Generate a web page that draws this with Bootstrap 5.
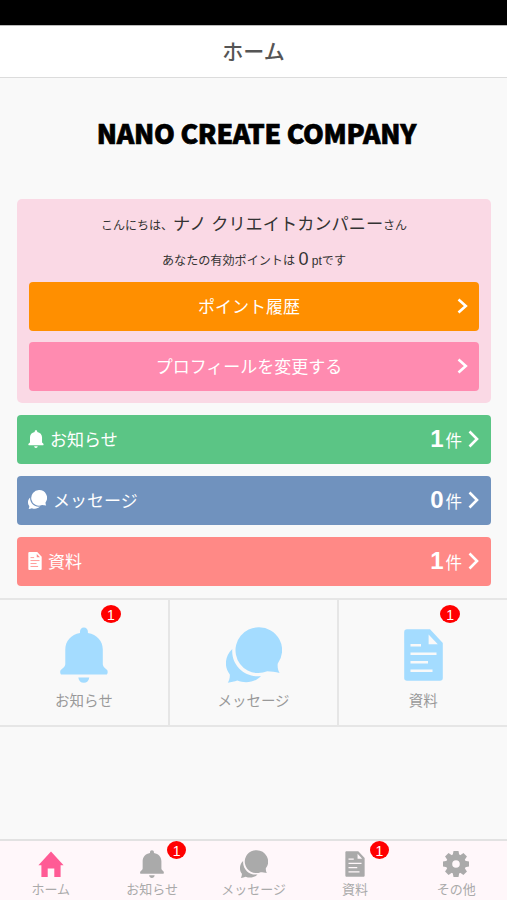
<!DOCTYPE html>
<html lang="ja">
<head>
<meta charset="utf-8">
<meta name="viewport" content="width=device-width, initial-scale=1">
<title>ホーム</title>
<link href="https://cdn.jsdelivr.net/npm/bootstrap@5.3.0/dist/css/bootstrap.min.css" rel="stylesheet">
<style>
body{font-family:"Liberation Sans","Noto Sans CJK JP",sans-serif;background:#f9f9f9;color:#333;height:900px;overflow:hidden;line-height:1.2}
a{color:inherit;text-decoration:none}
svg{display:block;fill:currentColor}
.statusbar{height:25px;background:#000}
.titlebar{height:53px;background:#fff;border-top:1px solid #bbb;border-bottom:1px solid #dcdcdc;color:#555;font-size:21px;font-weight:500;padding-top:1px}
.brand-area{height:121px;padding-bottom:12px}
.brand-name{font-family:"Noto Sans CJK JP",sans-serif;font-weight:900;font-size:26.500px;letter-spacing:-.25px;-webkit-text-stroke:.7px #000;color:#000;white-space:nowrap;margin-left:6px}
.page-body{padding:0 16px 0 17px}
.welcome{background:#fad9e5;border-radius:5px;height:204px;padding:12px;margin-bottom:12px}
.hello{font-size:12px;height:26px;line-height:26px}
.hello span{font-size:17.2px}
.points{font-size:12.1px;height:26px;line-height:25px;margin-top:10px;margin-bottom:9px}
.points span{font-size:18px}
.bar{height:49px;border-radius:4px;color:#fff;font-size:17px;padding:0 12px 0 11px}
.bar-center{padding:0 11px 0 12px;margin-bottom:11px}
.bar-label{padding-top:4px}
.bar-row{margin-bottom:12px}
.bar-row .bar-label{padding-left:2px}
.bar svg{position:relative;top:-1px}
.orange{background:#ff8f00}.pink{background:#ff8bb0}
.green{background:#5bc585}.blue{background:#7092be}.coral{background:#ff8986}
.num{font-size:24px;font-weight:700;line-height:1;margin-right:2px}
.unit{font-size:16.5px;margin-right:6px}
.chev{fill:none;stroke:#fff;stroke-width:2.6}
.tiles{height:129px;border-top:2px solid #e6e6e6;border-bottom:2px solid #e6e6e6}
.tile{color:#999;font-size:14.5px;padding-top:27px}
.tile+.tile{border-left:2px solid #e6e6e6}
.tile svg{color:#a4dcff;height:56px}
.tile p{margin:10px 0 0}
.count{position:absolute;background:#f00;color:#fff;font:14px/20px "Liberation Sans",sans-serif;width:20px;height:18px;border-radius:50%;text-align:center}
.tile .count{left:calc(50% + 17px);top:5px}
.tabs{height:61px;background:#fff7fa;border-top:2px solid #e2e2e2}
.tab{color:#aaa;font-size:13px;padding-top:9px}
.tab svg{height:28px}
.tab p{margin:4px 0 0;white-space:nowrap}
.tab .count{left:calc(50% + 15px);top:0;width:19px}
.home{color:#ff5b95}
.gap-page{--h:#f9f9f9}.gap-tab{--h:#fff7fa}.gap-coral{--h:#ff8986}
.paper-line{fill:none;stroke:var(--h);stroke-width:2.4}
.hole{fill:var(--h)}
</style>
<script src="https://cdn.jsdelivr.net/npm/bootstrap@5.3.0/dist/js/bootstrap.bundle.min.js"></script>
</head>
<body class="d-flex flex-column">
<svg width="0" height="0" class="d-none">
  <symbol id="bell" viewBox="0 0 48 56"><path d="M23.900.6c-2.400 0-3.900 1.700-3.900 4.200v1.200C11 7.700 5.300 14 5.300 22.500V37c0 1.500-.8 2.700-2 3.700L.8 43c-1.200 1.200-.5 4.600.8 4.600h44.700c1.300 0 1.900-3.400.8-4.500l-2.500-2.400c-1.100-1-1.800-2.200-1.800-3.700V22.500C42.800 14 37 7.700 27.900 6V4.800c0-2.500-1.600-4.200-4-4.200zM18.300 50.500h11c-.5 3.400-2.500 5.300-5.500 5.300s-5-1.900-5.500-5.300z"/></symbol>
  <symbol id="chat" viewBox="0 0 56 56"><path d="M32.500.3a22.900 22.900 0 1 0 8.800 44c3.400.2 8.500.8 12.300 1.700-1.600-2.900-2.200-5.700-1.900-9.300A22.900 22.900 0 0 0 32.500.3z"/><path d="M6.300 22C-1.500 29-2 40.500 3.800 47.500 4 50.500 3.300 53 1.800 55.800c3.300-.5 6.700-1.300 9.500-2.300C20 57 29.500 55 35 48.900 20 51.500 4.800 39 6.300 22z"/></symbol>
  <symbol id="paper" viewBox="0 0 39 52"><path d="M3 .3h23L38.800 14v35c0 1.800-1 2.700-2.800 2.700H3C1.200 51.700.2 50.800.2 49V3C.2 1.200 1.200.3 3 .3z"/><path class="hole" d="M24.600 5.500v9.800h9.200z"/><path class="paper-line" d="M6.500 16.200H17M6.500 24.700h26M6.500 33.300H24M6.500 41.800h22"/></symbol>
  <symbol id="house" viewBox="0 0 26 28"><path d="M13 1.500.4 15.300h3V27h6.300v-8.500h6.600V27h6.300V15.300h3z"/></symbol>
  <symbol id="gear" viewBox="-14 -14 28 28"><path fill-rule="evenodd" d="M-10 0a10 10 0 1 0 20 0a10 10 0 1 0-20 0zM-3.800 0a3.800 3.800 0 1 0 7.600 0a3.800 3.800 0 1 0-7.600 0z"/><path d="M-3.300-8.800-2.500-13h5L3.300-8.800zM-3.300 8.800-2.500 13h5L3.300 8.800zM-8.800-3.300-13-2.500v5L-8.800 3.300zM8.800-3.300 13-2.500v5L8.800 3.300z"/><path transform="rotate(45)" d="M-3.300-8.800-2.500-13h5L3.300-8.800zM-3.300 8.800-2.500 13h5L3.300 8.800zM-8.800-3.300-13-2.500v5L-8.800 3.300zM8.800-3.300 13-2.500v5L8.800 3.300z"/></symbol>
</svg>

<div class="statusbar flex-shrink-0"></div>
<header class="titlebar d-flex align-items-center justify-content-center flex-shrink-0">ホーム</header>
<div class="brand-area d-flex align-items-center justify-content-center flex-shrink-0"><div class="brand-name">NANO CREATE COMPANY</div></div>

<main class="page-body">
  <section class="welcome text-center">
    <div class="hello">こんにちは、<span>ナノ クリエイトカンパニー</span>さん</div>
    <div class="points">あなたの有効ポイントは <span>0</span> ptです</div>
    <a href="#" class="bar bar-center orange d-flex align-items-center"><span class="bar-label flex-grow-1">ポイント履歴</span><svg class="chev" width="11" height="16"><path d="m1.500 1.500 7.300 6.500-7.300 6.500"/></svg></a>
    <a href="#" class="bar bar-center pink d-flex align-items-center"><span class="bar-label flex-grow-1">プロフィールを変更する</span><svg class="chev" width="11" height="16"><path d="m1.500 1.500 7.300 6.500-7.300 6.500"/></svg></a>
  </section>
  <a href="#" class="bar bar-row green d-flex align-items-center"><svg width="16" height="18" class="me-1"><use href="#bell"/></svg><span class="bar-label me-auto">お知らせ</span><span class="d-flex align-items-baseline"><span class="num">1</span><span class="unit">件</span></span><svg class="chev" width="11" height="18"><path d="m1.500 1.500 7.500 7.500-7.500 7.500"/></svg></a>
  <a href="#" class="bar bar-row blue d-flex align-items-center"><svg width="19" height="19" class="me-1"><use href="#chat"/></svg><span class="bar-label me-auto">メッセージ</span><span class="d-flex align-items-baseline"><span class="num">0</span><span class="unit">件</span></span><svg class="chev" width="11" height="18"><path d="m1.500 1.500 7.500 7.500-7.500 7.500"/></svg></a>
  <a href="#" class="bar bar-row coral gap-coral d-flex align-items-center"><svg width="14" height="18" class="me-1"><use href="#paper"/></svg><span class="bar-label me-auto">資料</span><span class="d-flex align-items-baseline"><span class="num">1</span><span class="unit">件</span></span><svg class="chev" width="11" height="18"><path d="m1.500 1.500 7.500 7.500-7.500 7.500"/></svg></a>
</main>

<section class="tiles row g-0 gap-page flex-shrink-0">
  <a href="#" class="tile col position-relative text-center"><svg class="mx-auto" width="48"><use href="#bell"/></svg><p>お知らせ</p><span class="count">1</span></a>
  <a href="#" class="tile col position-relative text-center"><svg class="mx-auto" width="56"><use href="#chat"/></svg><p>メッセージ</p></a>
  <a href="#" class="tile col position-relative text-center"><svg class="mx-auto" width="39"><use href="#paper" y="2" height="52"/></svg><p>資料</p><span class="count">1</span></a>
</section>

<nav class="tabs row g-0 gap-tab mt-auto flex-shrink-0">
  <a href="#" class="tab col position-relative text-center"><svg class="mx-auto home" width="26"><use href="#house"/></svg><p>ホーム</p></a>
  <a href="#" class="tab col position-relative text-center"><svg class="mx-auto" width="24"><use href="#bell"/></svg><p>お知らせ</p><span class="count">1</span></a>
  <a href="#" class="tab col position-relative text-center"><svg class="mx-auto" width="28"><use href="#chat"/></svg><p>メッセージ</p></a>
  <a href="#" class="tab col position-relative text-center"><svg class="mx-auto" width="20"><use href="#paper" y="1" height="26"/></svg><p>資料</p><span class="count">1</span></a>
  <a href="#" class="tab col position-relative text-center"><svg class="mx-auto" width="28"><use href="#gear"/></svg><p>その他</p></a>
</nav>
</body>
</html>
